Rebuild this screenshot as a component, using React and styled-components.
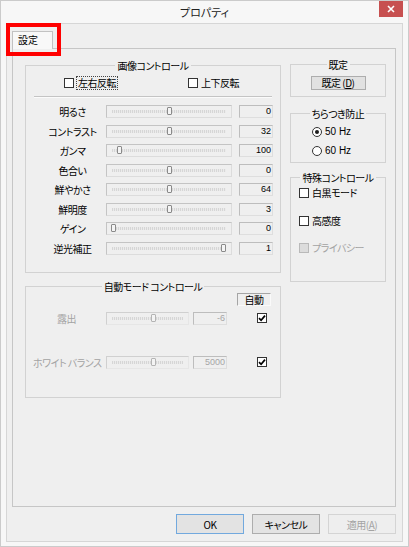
import React from 'react';
import styled, { createGlobalStyle } from 'styled-components';

const JP = `"Noto Sans CJK JP", "Noto Sans", sans-serif`;
const NUM = `"Liberation Sans", Arial, sans-serif`;

const GlobalStyle = createGlobalStyle`
  html, body { margin: 0; padding: 0; background: #f6f6f6; }
  body {
    font-family: ${JP};
    font-size: 10px;
    font-feature-settings: "palt";
    letter-spacing: -0.5px;
    color: #000;
  }
  * { box-sizing: border-box; }
`;

const imageRows = [
  { label: '明るさ', value: 0, pos: 0.51 },
  { label: 'コントラスト', value: 32, pos: 0.51 },
  { label: 'ガンマ', value: 100, pos: 0.055 },
  { label: '色合い', value: 0, pos: 0.51 },
  { label: '鮮やかさ', value: 64, pos: 0.51 },
  { label: '鮮明度', value: 3, pos: 0.51 },
  { label: 'ゲイン', value: 0, pos: 0 },
  { label: '逆光補正', value: 1, pos: 1 },
];

const autoRows = [
  { label: '露出', value: -6, pos: 0.6 },
  { label: 'ホワイト バランス', value: 5000, pos: 0.6 },
];

export default function App() {
  return (<>
    <GlobalStyle />
    <Window>
      <TitleBar>
        <span />
        <TitleText>プロパティ</TitleText>
        <CloseButton>
          <svg width="8" height="8" viewBox="0 0 8 8">
            <path d="M1 1 L7 7 M7 1 L1 7" stroke="#fff" strokeWidth="1.6" />
          </svg>
        </CloseButton>
      </TitleBar>
      <Client>
        <TabStrip>
          <Tab>設定</Tab>
        </TabStrip>
        <Panel>
          <LeftColumn>
            <Group $h={208}>
              <GroupTitle>画像コントロール</GroupTitle>
              <FlipRow>
                <CheckLabel><CheckBox /><Focus>左右反転</Focus></CheckLabel>
                <CheckLabel><CheckBox /><span>上下反転</span></CheckLabel>
              </FlipRow>
              <Separator />
              <SliderList>
                {imageRows.map((r) => (
                  <SliderRow key={r.label}>
                    <RowLabel $w={67}>{r.label}</RowLabel>
                    <Slider width={126} pos={r.pos} />
                    <NumBox $ml={7}>{r.value}</NumBox>
                  </SliderRow>
                ))}
              </SliderList>
            </Group>
            <Group $h={112} $mt={13}>
              <GroupTitle>自動モード コントロール</GroupTitle>
              <AutoHead>自動</AutoHead>
              {autoRows.map((r, i) => (
                <AutoRow key={r.label} $mt={i ? 20 : 0}>
                  <RowLabel $w={67} $disabled>{r.label}</RowLabel>
                  <Slider width={83} pos={r.pos} ml={6} disabled />
                  <NumBox $ml={4} $disabled>{r.value}</NumBox>
                  <CheckSlot><CheckBox checked /></CheckSlot>
                </AutoRow>
              ))}
            </Group>
          </LeftColumn>
          <RightColumn>
            <Group $h={33}>
              <GroupTitle>既定</GroupTitle>
              <SmallButton>既定 (<U>D</U>)</SmallButton>
            </Group>
            <Group $h={50} $mt={16}>
              <GroupTitle>ちらつき防止</GroupTitle>
              <RadioList>
                <RadioRow><Radio $on /><Latin>50 Hz</Latin></RadioRow>
                <RadioRow><Radio /><Latin>60 Hz</Latin></RadioRow>
              </RadioList>
            </Group>
            <Group $h={105} $mt={14}>
              <GroupTitle>特殊コントロール</GroupTitle>
              <CheckList>
                <CheckLabel><CheckBox /><span>白黒モード</span></CheckLabel>
                <CheckLabel><CheckBox /><span>高感度</span></CheckLabel>
                <CheckLabel $disabled><CheckBox disabled /><span>プライバシー</span></CheckLabel>
              </CheckList>
            </Group>
          </RightColumn>
        </Panel>
        <ButtonRow>
          <DlgButton $default>OK</DlgButton>
          <DlgButton>キャンセル</DlgButton>
          <DlgButton $disabled>適用(<U>A</U>)</DlgButton>
        </ButtonRow>
      </Client>
      <Highlight />
    </Window>
  </>);
}

const Slider = ({ width, pos, ml = 0, disabled }) => {
  const span = width - 2 - 14;
  const left = 6 + pos * span - 2.5;
  return (
    <SliderBox $w={width} $ml={ml} $disabled={disabled}>
      <Groove />
      <Thumb $disabled={disabled} style={{ left }} />
    </SliderBox>
  );
};

const CheckBox = ({ checked, disabled }) => (
  <Box $disabled={disabled}>
    {checked && (
      <svg width="8" height="8" viewBox="0 0 8 8">
        <path d="M1 4.2 L3.1 6.3 L7 1.6" fill="none" stroke="#000" strokeWidth="1.7" />
      </svg>
    )}
  </Box>
);

const Window = styled.div`
  position: relative;
  width: 409px;
  height: 547px;
  border: 1px solid #cbcbcb;
  background: #f7f7f7;
  display: flex;
  flex-direction: column;
  overflow: hidden;
`;

const TitleBar = styled.div`
  height: 22px;
  flex: none;
  display: grid;
  grid-template-columns: 1fr auto 1fr;
  align-items: center;
`;

const TitleText = styled.div`
  font-size: 11px;
  line-height: 14px;
  letter-spacing: 0;
  color: #222;
`;

const CloseButton = styled.div`
  justify-self: end;
  align-self: start;
  margin-right: 5px;
  width: 24px;
  height: 16px;
  background: #c75050;
  display: flex;
  align-items: center;
  justify-content: center;
`;

const Client = styled.div`
  flex: 1;
  margin: 0 5px 4px 5px;
  border: 1px solid #d6d6d6;
  background: #efefef;
  display: flex;
  flex-direction: column;
`;

const TabStrip = styled.div`
  height: 24px;
  flex: none;
  padding: 7px 0 0 5px;
`;

const Tab = styled.div`
  position: relative;
  z-index: 1;
  width: 41px;
  height: 18px;
  border: 1px solid #c2c2c2;
  border-bottom: none;
  background: #f8f8f8;
  padding-left: 5px;
  line-height: 16px;
  letter-spacing: 0;
`;

const Panel = styled.div`
  height: 459px;
  margin: 0 6px 0 5px;
  border: 1px solid #c6c6c6;
  padding: 15px 0 0 12px;
  display: flex;
  align-items: flex-start;
  gap: 9px;
`;

const LeftColumn = styled.div`
  width: 256px;
  padding-top: 1px;
  display: flex;
  flex-direction: column;
`;

const RightColumn = styled.div`
  width: 96px;
  display: flex;
  flex-direction: column;
`;

const Group = styled.div`
  height: ${(p) => p.$h}px;
  margin-top: ${(p) => p.$mt || 0}px;
  border: 1px solid #d2d2d2;
  display: flex;
  flex-direction: column;
`;

const GroupTitle = styled.div`
  align-self: center;
  margin-top: -7px;
  padding: 0 2px;
  background: #efefef;
  line-height: 13px;
  white-space: nowrap;
`;

const FlipRow = styled.div`
  margin-top: 4px;
  height: 14px;
  padding-left: 38px;
  display: grid;
  grid-template-columns: 124px auto;
  align-items: center;
`;

const CheckLabel = styled.div`
  display: flex;
  align-items: center;
  gap: 3px;
  height: 20px;
  line-height: 12px;
  color: ${(p) => (p.$disabled ? '#a3a3a3' : '#000')};
  ${FlipRow} & { height: 14px; }
`;

const Focus = styled.span`
  padding: 0 1px;
  outline: 1px dotted #444;
`;

const Box = styled.span`
  flex: none;
  width: 10px;
  height: 10px;
  border: 1px solid ${(p) => (p.$disabled ? '#b9b9b9' : '#333')};
  background: ${(p) => (p.$disabled ? '#dcdcdc' : '#fff')};
  display: inline-flex;
  align-items: center;
  justify-content: center;
`;

const Separator = styled.div`
  margin: 6px 8px 0;
  height: 2px;
  border-top: 1px solid #c4c4c4;
  border-bottom: 1px solid #fbfbfb;
`;

const SliderList = styled.div`
  margin-top: 4px;
  display: flex;
  flex-direction: column;
`;

const SliderRow = styled.div`
  height: 19.5px;
  padding-left: 13px;
  display: flex;
  align-items: center;
`;

const RowLabel = styled.div`
  width: ${(p) => p.$w}px;
  flex: none;
  text-align: center;
  white-space: nowrap;
  color: ${(p) => (p.$disabled ? '#a3a3a3' : '#000')};
`;

const SliderBox = styled.div`
  position: relative;
  flex: none;
  width: ${(p) => p.$w}px;
  height: 13px;
  margin-left: ${(p) => p.$ml}px;
  border: 1px solid;
  border-color: ${(p) => (p.$disabled
    ? '#d0d0d0 #e6e6e6 #e6e6e6 #d0d0d0'
    : '#c4c4c4 #dcdcdc #dcdcdc #c4c4c4')};
  padding: 0 5px;
  display: flex;
  align-items: center;
`;

const Groove = styled.div`
  flex: 1;
  height: 3px;
  background: repeating-linear-gradient(90deg, #d6d6d6 0 1px, #ebebeb 1px 2px);
`;

const Thumb = styled.div`
  position: absolute;
  top: 1px;
  width: 5px;
  height: 8px;
  border: 1px solid ${(p) => (p.$disabled ? '#b4b4b4' : '#8a8a8a')};
  border-radius: 1px;
  background: #f4f4f4;
`;

const NumBox = styled.div`
  flex: none;
  width: 34px;
  height: 13px;
  margin-left: ${(p) => p.$ml}px;
  border: 1px solid;
  border-color: #bdbdbd #dedede #dedede #bdbdbd;
  padding-right: 1px;
  text-align: right;
  font: 9px/11px ${NUM};
  letter-spacing: 0;
  color: ${(p) => (p.$disabled ? '#a6a6a6' : '#000')};
`;

const AutoHead = styled.div`
  align-self: flex-end;
  margin-right: 9px;
  width: 34px;
  height: 13px;
  border: 1px solid;
  border-color: #a5a5a5 #fafafa #fafafa #a5a5a5;
  text-align: center;
  line-height: 11px;
`;

const AutoRow = styled.div`
  height: 24px;
  margin-top: ${(p) => p.$mt}px;
  padding-left: 7px;
  display: flex;
  align-items: center;
`;

const CheckSlot = styled.div`
  margin-left: 30px;
  display: flex;
`;

const SmallButton = styled.div`
  align-self: center;
  margin-top: 5px;
  width: 55px;
  height: 14px;
  border: 1px solid #adadad;
  background: #e1e1e1;
  text-align: center;
  line-height: 12px;
`;

const U = styled.span`
  text-decoration: underline;
`;

const RadioList = styled.div`
  margin-top: 2px;
  display: flex;
  flex-direction: column;
`;

const RadioRow = styled.div`
  height: 19.5px;
  padding-left: 21px;
  display: flex;
  align-items: center;
  gap: 3px;
`;

const Radio = styled.span`
  flex: none;
  width: 10px;
  height: 10px;
  border-radius: 50%;
  border: 1px solid #333;
  background: #fff;
  display: inline-flex;
  align-items: center;
  justify-content: center;
  &::after {
    content: '';
    display: ${(p) => (p.$on ? 'block' : 'none')};
    width: 4px;
    height: 4px;
    border-radius: 50%;
    background: #1c1c1c;
  }
`;

const Latin = styled.span`
  font: 10px/12px ${NUM};
  letter-spacing: 0;
`;

const CheckList = styled.div`
  margin-top: -1px;
  padding-left: 8px;
  display: flex;
  flex-direction: column;
  gap: 7.5px;
`;

const ButtonRow = styled.div`
  margin-top: 7px;
  padding-right: 6px;
  display: flex;
  justify-content: flex-end;
  gap: 8px;
`;

const DlgButton = styled.button`
  width: 68px;
  height: 20px;
  padding: 0;
  font-family: ${JP};
  font-size: 10px;
  font-feature-settings: "palt";
  letter-spacing: -0.5px;
  border: 1px solid ${(p) => (p.$default ? '#72a9de' : p.$disabled ? '#d4d4d4' : '#adadad')};
  background: ${(p) => (p.$disabled ? '#eeeeee' : '#e3e3e3')};
  color: ${(p) => (p.$disabled ? '#a3a3a3' : '#000')};
`;

const Highlight = styled.div`
  position: absolute;
  left: 5px;
  top: 22px;
  width: 55px;
  height: 33px;
  border: 4px solid #f00;
  pointer-events: none;
`;
